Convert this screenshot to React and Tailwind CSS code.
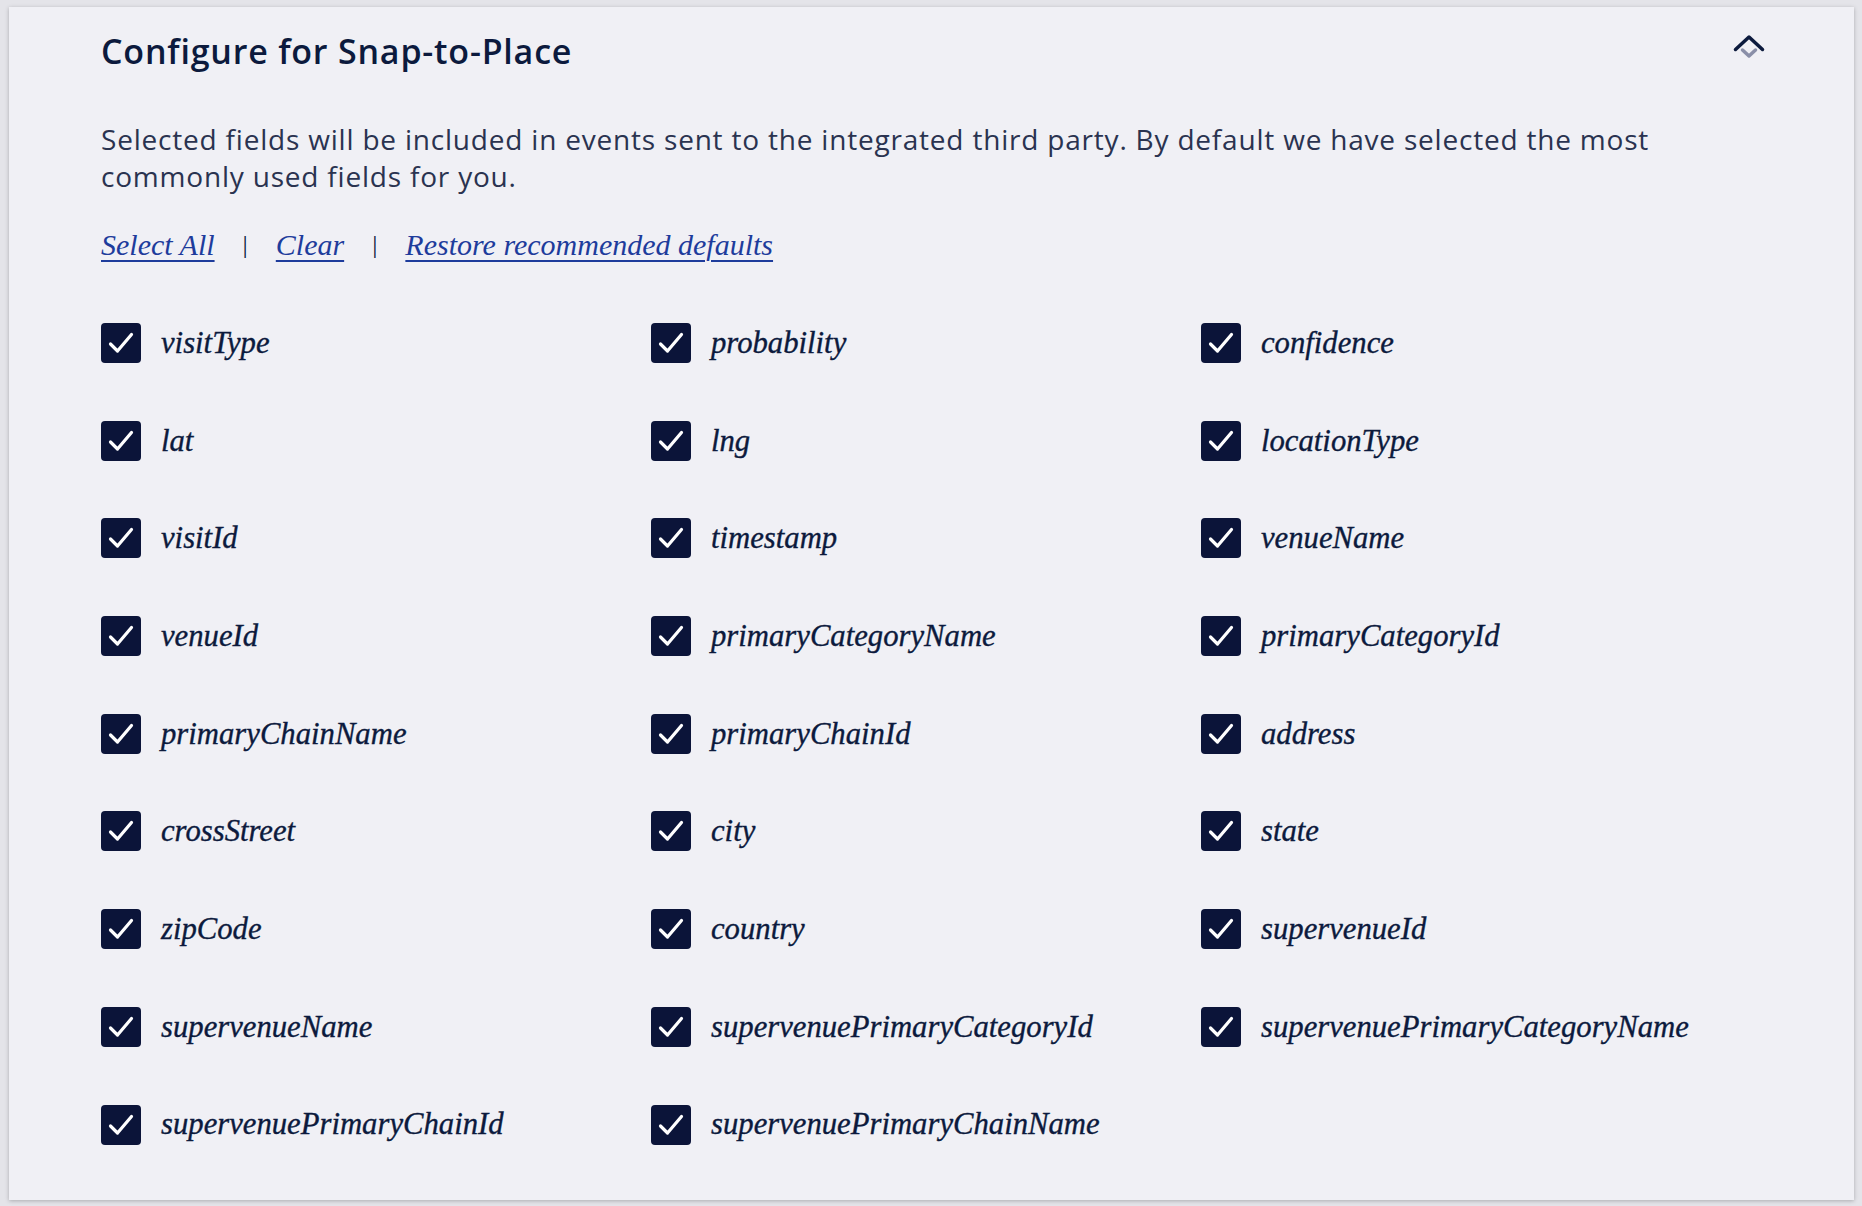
import React, { useState } from "react";

const FIELDS = [
  "visitType", "probability", "confidence",
  "lat", "lng", "locationType",
  "visitId", "timestamp", "venueName",
  "venueId", "primaryCategoryName", "primaryCategoryId",
  "primaryChainName", "primaryChainId", "address",
  "crossStreet", "city", "state",
  "zipCode", "country", "supervenueId",
  "supervenueName", "supervenuePrimaryCategoryId", "supervenuePrimaryCategoryName",
  "supervenuePrimaryChainId", "supervenuePrimaryChainName",
];

const serif = { fontFamily: '"Liberation Serif", "DejaVu Serif", serif' };
const sans = { fontFamily: '"Open Sans", Lato, sans-serif' };

const CheckBox = ({ checked }) => (
  <span className="w-[40px] h-[40px] shrink-0 rounded-[4px] bg-[#0b1439] flex items-center justify-center">
    {checked && (
      <svg width="40" height="40" viewBox="0 0 40 40">
        <path d="M9.5 21 L16.5 28 L30.5 11.5" fill="none" stroke="#fff" strokeWidth="3.2" strokeLinecap="round" strokeLinejoin="round" />
      </svg>
    )}
  </span>
);

const App = () => {
  const [checked, setChecked] = useState(() => Object.fromEntries(FIELDS.map((f) => [f, true])));

  const toggle = (f) => setChecked((c) => ({ ...c, [f]: !c[f] }));

  return (
    <div className="w-[1862px] h-[1206px] bg-[#e4e4e9] pt-[7px] pl-[9px] overflow-hidden">
      <section className="relative w-[1845px] h-[1193px] bg-[#f0f0f5] shadow-[0_1px_4px_rgba(0,0,0,0.25)] pl-[92px] pt-[24px] text-[#0c1a3d]">
        {/* header */}
        <h2 className="text-[34px] leading-[40px] font-semibold tracking-[0.8px]" style={sans}>
          Configure for Snap-to-Place
        </h2>
        <button className="absolute left-[1713px] top-[20px] w-[56px] h-[40px] flex items-center justify-center">
          <svg width="34" height="26" viewBox="0 0 34 26">
            <path d="M9.5 16 L16 22 L22.5 16" fill="none" stroke="#8a8fa8" strokeWidth="3.5" strokeLinecap="round" strokeLinejoin="round" />
            <path d="M2.5 15.5 L16 3 L29.5 15.5" fill="none" stroke="#0c1a3d" strokeWidth="3.5" strokeLinecap="round" strokeLinejoin="round" />
          </svg>
        </button>

        <p className="mt-[50px] w-[1590px] text-[28px] leading-[37px] text-[#2a3350] tracking-[0.8px]" style={sans}>
          Selected fields will be included in events sent to the integrated third party. By default we have selected the most commonly used fields for you.
        </p>

        {/* actions */}
        <div className="mt-[29px] flex items-center h-[40px] text-[30px] italic text-[#1e3c9c]" style={serif}>
          <a href="#" className="underline underline-offset-[5px] decoration-[2px]">Select All</a>
          <span className="mx-[28px] not-italic text-[#0c1a3d] text-[26px]">|</span>
          <a href="#" className="underline underline-offset-[5px] decoration-[2px]">Clear</a>
          <span className="mx-[28px] not-italic text-[#0c1a3d] text-[26px]">|</span>
          <a href="#" className="underline underline-offset-[5px] decoration-[2px]">Restore recommended defaults</a>
        </div>

        {/* fields */}
        <div className="mt-[59px] grid grid-cols-[550px_550px_550px] gap-y-[57.7px]">
          {FIELDS.map((f) => (
            <label key={f} className="flex items-center gap-[20px] h-[40px] cursor-pointer" onClick={() => toggle(f)}>
              <CheckBox checked={checked[f]} />
              <span className="text-[30.7px] italic text-[#0c1a3d] [-webkit-text-stroke:0.35px_#0c1a3d]" style={serif}>{f}</span>
            </label>
          ))}
        </div>
      </section>
    </div>
  );
};

export default App;
